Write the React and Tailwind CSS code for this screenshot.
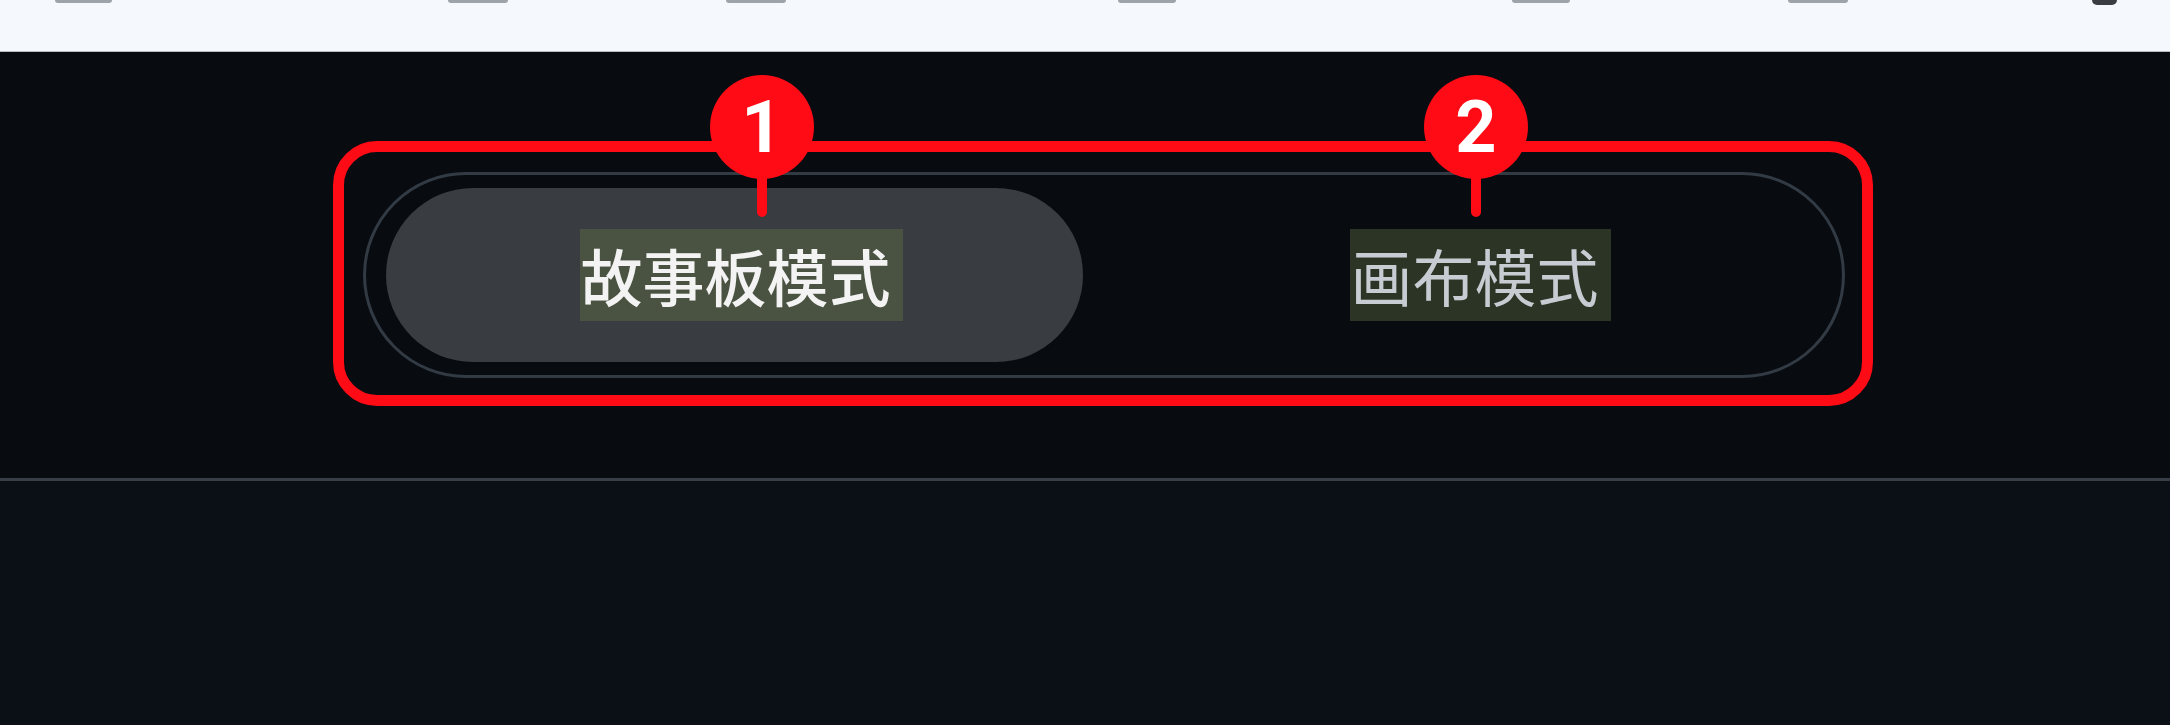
import React from 'react';

const fontCjk = { fontFamily: '"Noto Sans CJK SC", "Noto Sans", sans-serif' };

// cropped text remnants peeking at the very top of the white bar
const topBits = [
  { ml: 'ml-[55px]', w: 'w-[57px]' },
  { ml: 'ml-[336px]', w: 'w-[60px]' },
  { ml: 'ml-[218px]', w: 'w-[60px]' },
  { ml: 'ml-[332px]', w: 'w-[58px]' },
  { ml: 'ml-[336px]', w: 'w-[58px]' },
  { ml: 'ml-[218px]', w: 'w-[60px]' },
];

const Badge = ({ n, left }) => (
  <div className={`absolute top-[75px] ${left} w-[104px] flex flex-col items-center`}>
    <div className="w-[104px] h-[104px] rounded-full bg-[#ff0b16] flex items-center justify-center">
      <span className="text-white font-bold text-[72px] leading-none pt-[2px]" style={{ fontFamily: 'Roboto, "Liberation Sans", sans-serif' }}>
        {n}
      </span>
    </div>
    <div className="w-[10px] h-[40px] -mt-[2px] bg-[#ff0b16] rounded-b-full" />
  </div>
);

const ModeButton = ({ label, active }) => (
  <button
    className={`h-full rounded-full flex items-center justify-center pl-[14px] ${
      active ? 'bg-[#393c40] text-[#f3f3f3]' : 'bg-transparent text-[#c6ccd1]'
    }`}
  >
    <span
      className={`text-[62px] leading-[92px] pr-[12px] ${active ? 'font-medium bg-[#4a5341]' : 'font-normal bg-[#2c3525]'}`}
      style={fontCjk}
    >
      {label}
    </span>
  </button>
);

export default function App() {
  return (
    <div className="relative w-full h-[725px] overflow-hidden flex flex-col bg-[#0b0f16]">
      {/* top white bar */}
      <div className="h-[52px] shrink-0 bg-[#f5f8fd] border-b border-[#b9bdc3] flex items-start">
        {topBits.map((b, i) => (
          <div key={i} className={`${b.ml} ${b.w} h-[3px] bg-[#9ea3aa] rounded-b-sm`} />
        ))}
        <div className="ml-[244px] w-[25px] h-[5px] bg-[#3a3d42] rounded-b-full" />
      </div>

      {/* mode switch area */}
      <div className="h-[426px] shrink-0 bg-[#080c11] pt-[120px] pl-[363px]">
        <div className="w-[1482px] h-[206px] rounded-full border-[3px] border-[#323a44] px-[20px] py-[13px] grid grid-cols-2 gap-[42px]">
          <ModeButton label="故事板模式" active />
          <ModeButton label="画布模式" />
        </div>
      </div>

      <div className="h-[3px] shrink-0 bg-[#373e48]" />
      <div className="flex-1 bg-[#0b0f16]" />

      {/* annotation overlay */}
      <div className="absolute left-[333px] top-[141px] w-[1540px] h-[265px] border-[11px] border-[#ff0b16] rounded-[44px] pointer-events-none" />
      <Badge n="1" left="left-[710px]" />
      <Badge n="2" left="left-[1424px]" />
    </div>
  );
}
